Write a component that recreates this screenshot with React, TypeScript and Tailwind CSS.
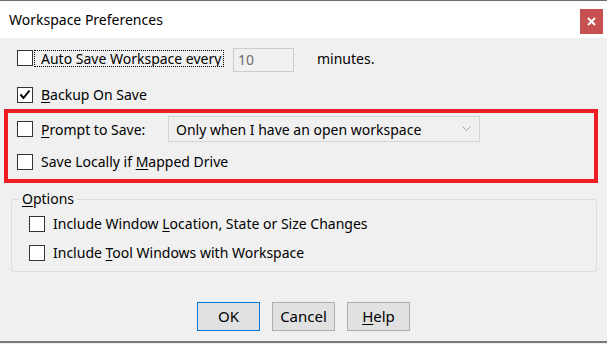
import React from "react";

function Mn({ children }: { children: React.ReactNode }) {
  return <span className="underline underline-offset-[2px] decoration-1">{children}</span>;
}

function Box({ checked = false }: { checked?: boolean }) {
  return (
    <div className="w-[16px] h-[16px] shrink-0 border border-[#333333] bg-white">
      {checked && (
        <svg width="14" height="14" viewBox="0 0 14 14" className="block">
          <path d="M2.5 6.5 L5.5 10 L11.5 2.5" fill="none" stroke="#000" strokeWidth="2" />
        </svg>
      )}
    </div>
  );
}

function Btn({ children, primary = false }: { children: React.ReactNode; primary?: boolean }) {
  return (
    <button
      className={
        "w-[63px] h-[29px] bg-[#e1e1e1] border text-[15px] leading-none " +
        (primary ? "border-[#0078d7]" : "border-[#adadad]")
      }
    >
      {children}
    </button>
  );
}

export default function App() {
  return (
    <div className="w-[607px] h-[344px] bg-[#f0f0f0] flex flex-col overflow-hidden text-black text-[14px] font-['Noto_Sans',sans-serif]">
      <div className="h-px bg-[#6e6e6e] shrink-0" />
      <div className="h-[37px] shrink-0 bg-white flex items-start justify-between pl-[9px] pr-[4px]">
        <span className="mt-[9px] text-[14px] leading-[20px]">Workspace Preferences</span>
        <div className="mt-[8px] w-[23px] h-[25px] bg-[#c75050] flex items-center justify-center">
          <svg width="9" height="9" viewBox="0 0 9 9">
            <path d="M1 1 L8 8 M8 1 L1 8" stroke="#fff" strokeWidth="2" />
          </svg>
        </div>
      </div>

      <div className="flex flex-col pt-[10px]">
        {/* row 1 */}
        <div className="flex items-start h-[24px] pl-[17px]">
          <div className="mt-[2px]">
            <Box />
          </div>
          <div className="ml-[1px] mt-[2px] w-[190px] h-[17px] border border-dotted border-black overflow-hidden pl-[6px] whitespace-nowrap leading-[15px]">
            <Mn>A</Mn>uto Save Workspace every
          </div>
          <div className="ml-[9px] w-[61px] h-[24px] border border-[#cccccc] bg-[#f0f0f0] pl-[4px] leading-[22px] text-[#6d6d6d]">
            10
          </div>
          <span className="ml-[23px] leading-[22px]">minutes.</span>
        </div>

        {/* row 2 */}
        <div className="flex items-center h-[16px] mt-[15px] pl-[17px] gap-[8px]">
          <Box checked />
          <span className="leading-[16px]">
            <Mn>B</Mn>ackup On Save
          </span>
        </div>

        {/* highlighted group */}
        <div className="mt-[6px] ml-[4px] w-[594px] h-[74px] border-[4px] border-[#ed1c24] flex flex-col pt-[3px]">
          <div className="flex items-center h-[26px] pl-[9px]">
            <Box />
            <span className="ml-[8px] w-[127px]">
              <Mn>P</Mn>rompt to Save:
            </span>
            <div className="w-[312px] h-[26px] border border-[#d4d4d4] flex items-center justify-between pl-[7px] pr-[8px]">
              <span>Only when I have an open workspace</span>
              <svg width="9" height="6" viewBox="0 0 9 6">
                <path d="M0.5 0.5 L4.5 4.5 L8.5 0.5" fill="none" stroke="#a6a6a6" strokeWidth="1" />
              </svg>
            </div>
          </div>
          <div className="flex items-center h-[16px] mt-[12px] pl-[9px] gap-[8px]">
            <Box />
            <span className="leading-[16px]">
              Save Locally if <Mn>M</Mn>apped Drive
            </span>
          </div>
        </div>

        {/* options group */}
        <fieldset className="mt-[7px] ml-[11px] w-[586px] h-[82px] border border-[#dcdcdc] rounded-[3px] pl-[7px]">
          <legend className="px-[3px] leading-[18px]">
            <Mn>O</Mn>ptions
          </legend>
          <div className="flex flex-col pl-[10px]">
            <div className="flex items-center h-[16px] mt-[8px] gap-[8px]">
              <Box />
              <span className="leading-[16px]">
                Include Window <Mn>L</Mn>ocation, State or Size Changes
              </span>
            </div>
            <div className="flex items-center h-[16px] mt-[13px] gap-[8px]">
              <Box />
              <span className="leading-[16px]">
                Include <Mn>T</Mn>ool Windows with Workspace
              </span>
            </div>
          </div>
        </fieldset>

        {/* buttons */}
        <div className="flex justify-center gap-[12px] mt-[30px]">
          <Btn primary>OK</Btn>
          <Btn>Cancel</Btn>
          <Btn>
            <Mn>H</Mn>elp
          </Btn>
        </div>
      </div>
      <div className="mt-auto mb-[1px] h-[2px] bg-[#7a7a7a] shrink-0" />
    </div>
  );
}
